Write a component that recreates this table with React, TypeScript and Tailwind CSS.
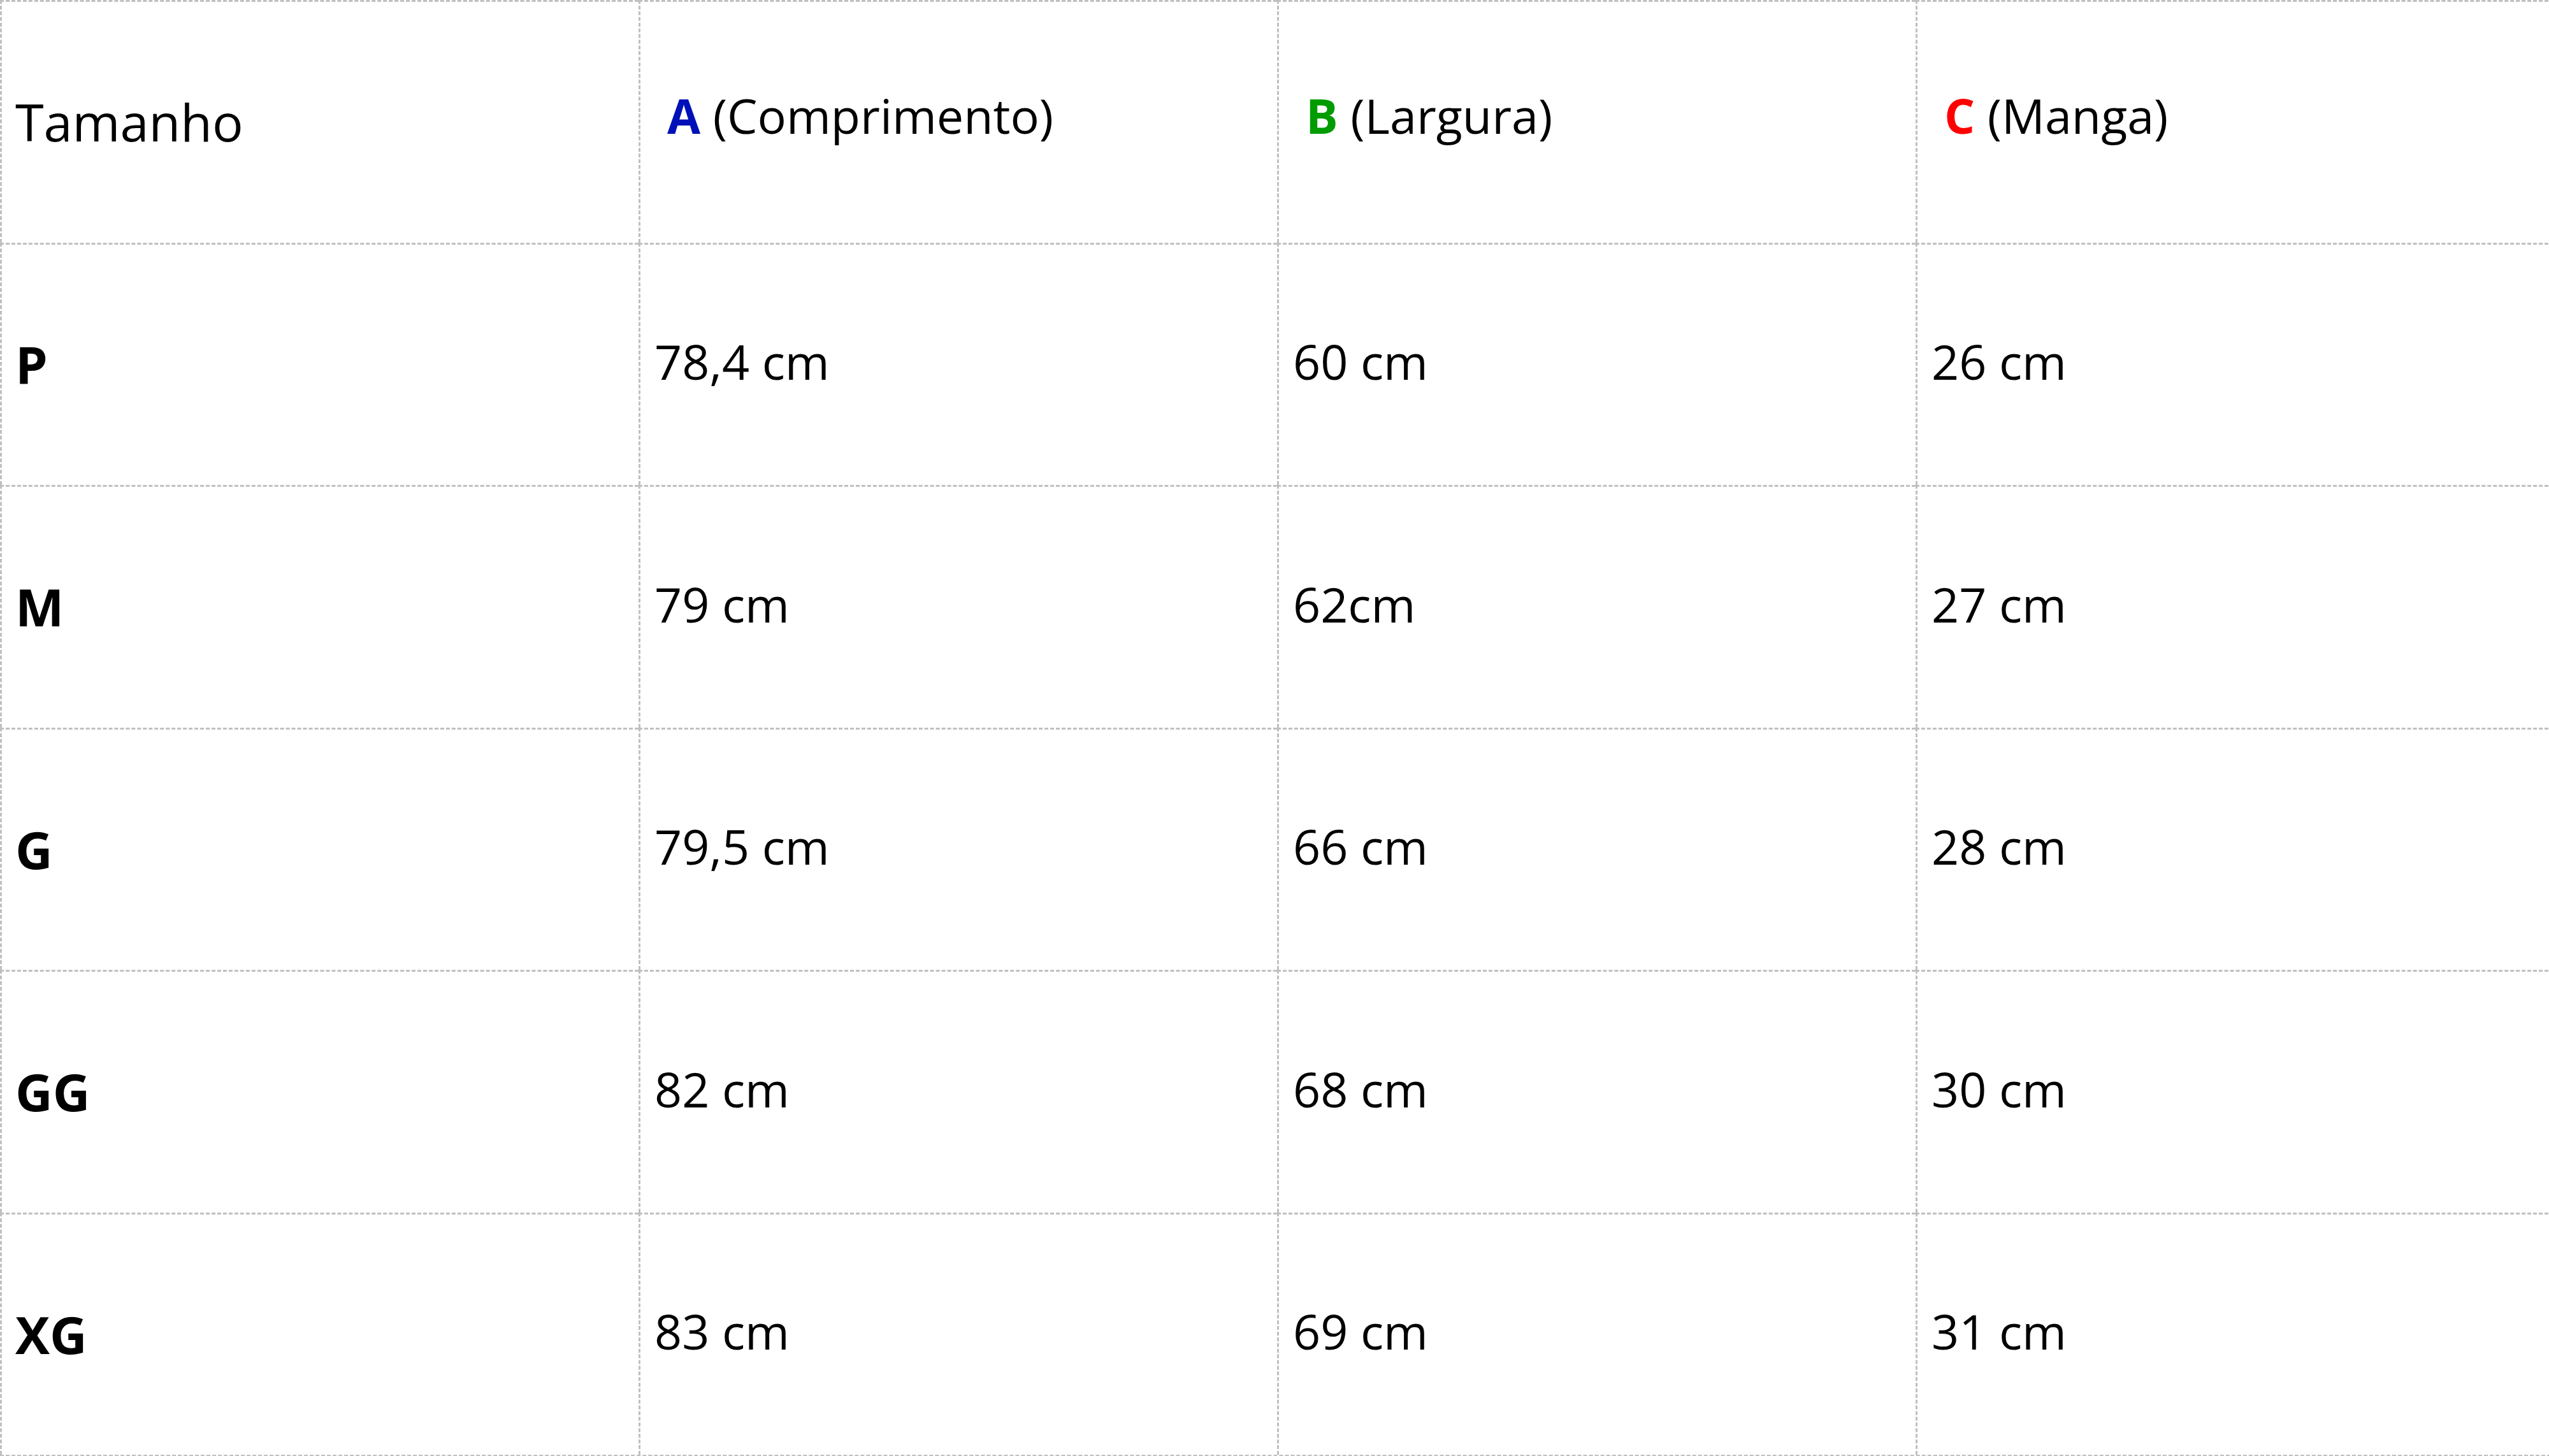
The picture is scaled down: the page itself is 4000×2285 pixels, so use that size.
import React from 'react';

interface SizeRow {
    size: string;
    a: string;
    b: string;
    c: string;
}

const rows: SizeRow[] = [
    { size: 'P', a: '78,4 cm', b: '60 cm', c: '26 cm' },
    { size: 'M', a: '79 cm', b: '62cm', c: '27 cm' },
    { size: 'G', a: '79,5 cm', b: '66 cm', c: '28 cm' },
    { size: 'GG', a: '82 cm', b: '68 cm', c: '30 cm' },
    { size: 'XG', a: '83 cm', b: '69 cm', c: '31 cm' }
];

const cell = 'h-[380.5px] w-[1002px] shrink-0 flex items-center border-l-[3px] border-t-[3px] border-dashed border-[#c0c0c0]';

export default function App() {
    return (
        <div className="w-[4000px] h-[2285px] overflow-hidden bg-white text-black font-['Open_Sans',sans-serif]">
            <div className="w-[4012px] flex flex-col border-b-[3px] border-dashed border-[#c0c0c0]">
                <div className="flex">
                    <div className={`${cell} pl-[21px] pb-[2px] text-[81px]`}>Tamanho</div>
                    <div className={`${cell} pl-[42px] pb-[22px] text-[75.5px]`}>
                        <span className="font-bold text-[#0010b8]">A</span>&nbsp;(Comprimento)
                    </div>
                    <div className={`${cell} pl-[42px] pb-[22px] text-[75.5px]`}>
                        <span className="font-bold text-[#009c00]">B</span>&nbsp;(Largura)
                    </div>
                    <div className={`${cell} pl-[42px] pb-[22px] text-[75.5px]`}>
                        <span className="font-bold text-[#ff0000]">C</span>&nbsp;(Manga)
                    </div>
                </div>
                {rows.map((row) => (
                    <div key={row.size} className="flex">
                        <div className={`${cell} pl-[21px] pb-[2px] text-[81px] font-bold`}>{row.size}</div>
                        <div className={`${cell} pl-[22px] pb-[11px] text-[75.5px]`}>{row.a}</div>
                        <div className={`${cell} pl-[22px] pb-[11px] text-[75.5px]`}>{row.b}</div>
                        <div className={`${cell} pl-[22px] pb-[11px] text-[75.5px]`}>{row.c}</div>
                    </div>
                ))}
            </div>
        </div>
    );
}
